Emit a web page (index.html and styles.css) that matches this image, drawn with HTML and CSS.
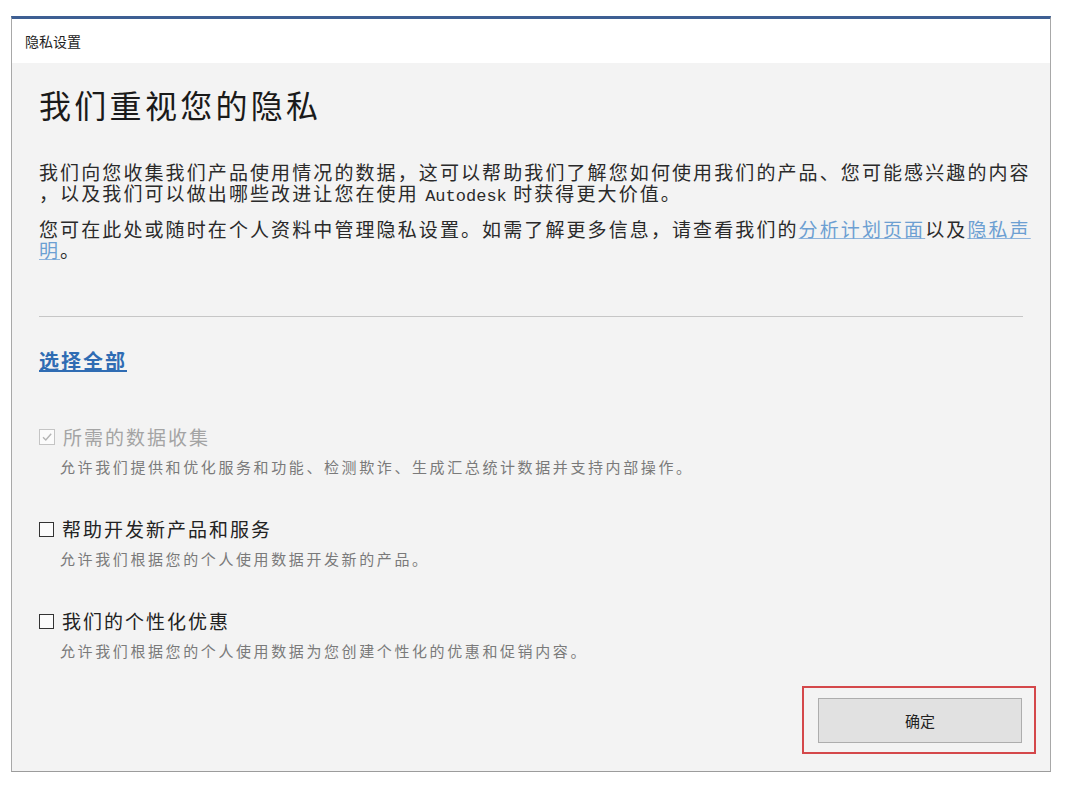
FILE: index.html
```html
<!DOCTYPE html>
<html lang="zh-CN">
<head>
    <meta charset="UTF-8">
    <title>隐私设置</title>
    <link rel="stylesheet" href="styles.css">
</head>
<body>
    <div class="window">
        <div class="titlebar">隐私设置</div>

        <div class="content">
            <h1>我们重视您的隐私</h1>

            <p class="intro">我们向您收集我们产品使用情况的数据，这可以帮助我们了解您如何使用我们的产品、您可能感兴趣的内容<br>，以及我们可以做出哪些改进让您在使用 <span class="latin">Autodesk</span> 时获得更大价值。</p>
            <p class="intro">您可在此处或随时在个人资料中管理隐私设置。如需了解更多信息，请查看我们的<a href="#" class="soft-link">分析计划页面</a>以及<a href="#" class="soft-link">隐私声<br>明</a>。</p>

            <hr class="divider">

            <a href="#" class="select-all">选择全部</a>

            <div class="options">
                <div class="option disabled">
                    <div class="option-title">
                        <span class="box checked">
                            <svg viewBox="0 0 14 14" width="14" height="14"><path d="M3 7.2 L5.8 10 L11.2 3.8" fill="none" stroke="#b4b4b4" stroke-width="1.4"/></svg>
                        </span>
                        所需的数据收集
                    </div>
                    <div class="option-desc">允许我们提供和优化服务和功能、检测欺诈、生成汇总统计数据并支持内部操作。</div>
                </div>

                <div class="option">
                    <div class="option-title"><span class="box"></span>帮助开发新产品和服务</div>
                    <div class="option-desc">允许我们根据您的个人使用数据开发新的产品。</div>
                </div>

                <div class="option">
                    <div class="option-title"><span class="box"></span>我们的个性化优惠</div>
                    <div class="option-desc">允许我们根据您的个人使用数据为您创建个性化的优惠和促销内容。</div>
                </div>
            </div>

            <div class="footer">
                <div class="highlight">
                    <button class="ok">确定</button>
                </div>
            </div>
        </div>
    </div>
</body>
</html>
```

FILE: styles.css
```css
body {
    margin: 0;
    padding: 0;
    background-color: #ffffff;
    font-family: "Noto Sans CJK SC", "Noto Sans", sans-serif;
    color: #1e1e1e;
}

.window {
    margin: 16px 0 0 11px;
    width: 1038px;
    border-top: 3px solid #3e5f93;
    border-left: 1px solid #a8a8a8;
    border-right: 1px solid #a8a8a8;
    border-bottom: 1px solid #9c9c9c;
    background-color: #f3f3f3;
}

.titlebar {
    height: 44px;
    line-height: 44px;
    padding-left: 13px;
    font-size: 14px;
    color: #222;
    background-color: #ffffff;
}

.content {
    height: 708px;
    padding: 21px 8px 0 27px;
    box-sizing: border-box;
    display: flex;
    flex-direction: column;
}

h1 {
    margin: 0;
    font-size: 32px;
    font-weight: 400;
    line-height: 40px;
    letter-spacing: 3.3px;
    color: #1a1a1a;
}

.intro {
    margin: 0;
    font-size: 19px;
    line-height: 21px;
    letter-spacing: 2.1px;
    color: #2a2a2a;
    white-space: nowrap;
}

.intro:first-of-type {
    margin-top: 37px;
}

.intro + .intro {
    margin-top: 11px;
}

.latin {
    font-family: "Liberation Mono", monospace;
    font-size: 17px;
    letter-spacing: 0;
}

.soft-link {
    color: #6c9fd2;
    text-decoration: underline;
    text-decoration-color: #8fb4dc;
}

.divider {
    margin: 56px 0 0 0;
    width: 984px;
    border: none;
    border-top: 1px solid #c6c6c6;
}

.select-all {
    margin-top: 32px;
    align-self: flex-start;
    font-size: 20px;
    line-height: 24px;
    font-weight: 700;
    letter-spacing: 2px;
    color: #2f6cb3;
    text-decoration: underline;
}

.options {
    margin-top: 52px;
    display: flex;
    flex-direction: column;
    gap: 39px;
}

.option-title {
    display: flex;
    align-items: center;
    font-size: 19px;
    line-height: 24px;
    letter-spacing: 2px;
    color: #222;
}

.box {
    width: 13px;
    height: 13px;
    border: 1.5px solid #333;
    margin-right: 8px;
    display: flex;
    align-items: center;
    justify-content: center;
    background-color: #fbfbfb;
}

.option.disabled .option-title {
    color: #a4a4a4;
}

.option.disabled .box {
    border: 1px solid #c4c4c4;
    width: 14px;
    height: 14px;
}

.option-desc {
    margin-top: 6px;
    padding-left: 21px;
    font-size: 15px;
    line-height: 23px;
    letter-spacing: 2.6px;
    color: #7a7a7a;
}

.footer {
    margin-top: auto;
    padding-bottom: 17px;
    display: flex;
    justify-content: flex-end;
}

.highlight {
    margin-right: 6px;
    padding: 10px 12px 9px 14px;
    border: 2px solid #d4474a;
}

.ok {
    width: 204px;
    height: 45px;
    background-color: #e1e1e1;
    border: 1px solid #adadad;
    font-family: "Noto Sans CJK SC", sans-serif;
    font-size: 15px;
    color: #222;
}
```
